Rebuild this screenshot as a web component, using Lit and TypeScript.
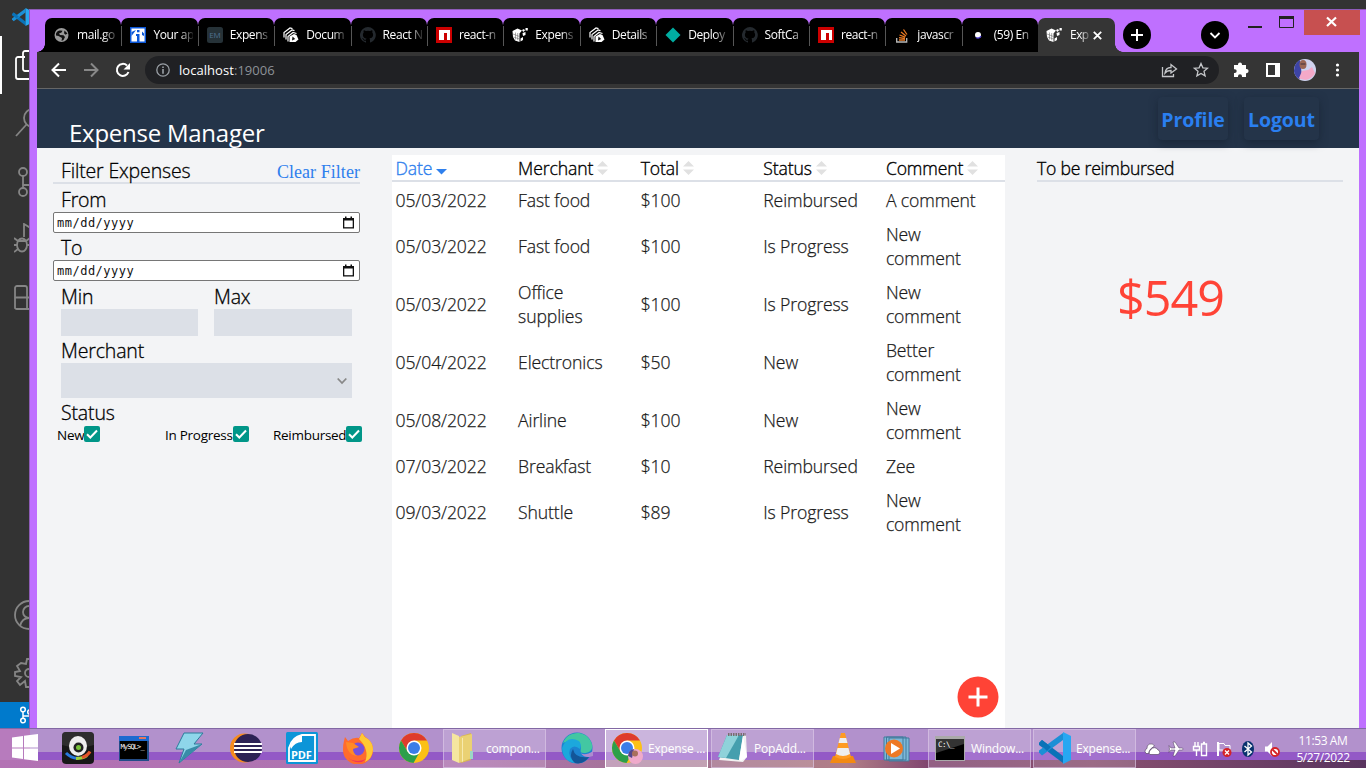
import { LitElement, html, svg, css } from "lit";
import { customElement } from "lit/decorators.js";
import { classMap } from "lit/directives/class-map.js";

const npm = svg`<path fill="#c00" d="M0 0h16v16H0z"/><path fill="#fff" d="M3 3h11v10h-3V6H8v7H3z"/>`;
const github = svg`<path fill="#24292e" d="M8 0a8 8 0 0 0-2.5 15.6c.4 0 .5-.2.5-.4v-1.500c-2.200.5-2.700-1-2.700-1-.4-.9-.9-1.100-.9-1.100-.7-.5.1-.5.1-.5.8 0 1.200.8 1.200.8.7 1.300 1.900.9 2.300.7.1-.5.3-.9.500-1.100-1.800-.2-3.600-.9-3.600-4 0-.9.3-1.600.8-2.100-.1-.2-.4-1 .1-2.100 0 0 .7-.2 2.200.8a7.500 7.500 0 0 1 4 0c1.500-1 2.200-.8 2.200-.8.4 1.100.2 1.900.1 2.100.5.6.8 1.300.8 2.100 0 3.100-1.900 3.700-3.700 3.900.3.3.6.8.6 1.500v2.200c0 .2.1.5.6.4A8 8 0 0 0 8 0z"/>`;
const cube = svg`<path fill="#fff" d="M.5 4L5.500 1.500l4.500 2L7.500 6.500V15L3 13.500 1 10z"/><path fill="#fff" d="M10 3l2-1 1 1.500-1.800 1.500zM13.500 1h2.300v2.500h-2.300zM10.500 6l3-1v3l-2.500 1zM8.500 11.500L11 10v3l-2.500 1.500z"/><path d="M1 7l6.500 2.500M1.500 10l6 2M3.500 5.500v7M5.700 6v7.200" stroke="#555" stroke-width=".5" fill="none"/>`;
const stack = svg`<g fill="none" stroke="#fff" stroke-width="1.200"><path d="M1 10.500V5.500L7 1l2.500.7M3 12.500v-5L9 3l2.500.7M5 14.500V9.500l5-4 3.500 1"/></g><path fill="#fff" d="M6.500 9.500l4.500-2.500 2.500 1 2 4.500-3 2.500H6.500z"/><path fill="#111" d="M9.500 9.500l2.700 2.500-3.200 1.500z"/>`;

const favicons: Record<string, unknown> = {
  globe: svg`<circle cx="7.500" cy="8" r="7" fill="#9a9a9a"/><path fill="#111" d="M2 6.500C3 4 5 3 6.500 3.500l2 .2L7.500 5.500 5 6.500l1 1.500 3.500.3 1.500 1.700-1.500 3-2 1 .5-3L4.500 9 2 8.500zM10.500 3.500l3 3-2 1.300-1.500-1.500z"/>`,
  info: svg`<path fill="#fff" d="M0 0h16v16H0z"/><path fill="none" stroke="#0b57d8" stroke-width="1.500" d="M.7.700h14.600v14.600H.7z"/><path fill="#0b57d8" d="M7 3h2.500v2.300H7zM6 7h3.500v8H7V9H6zM3 7l-1.500 2V5L6 3zM12 8V4.500l2 2V9z"/>`,
  em: svg`<rect width="16" height="16" rx="2.500" fill="#263238"/><text x="8" y="11" text-anchor="middle" font-family="Open Sans" font-size="8" fill="#4f7091">EM</text>`,
  stack, github, npm, cube,
  diamond: svg`<path fill="#00ada1" d="M8 .5L15.500 8 8 15.500.5 8z"/>`,
  so: svg`<path fill="none" stroke="#b9b9b9" stroke-width="1.300" d="M2.700 11v4h10v-4"/><path stroke="#e87922" stroke-width="1.300" d="M5 13h6M5 10.700l6 .8M5.500 8l5.700 2.200M7 5l5 4M9.500 2.500l3.500 5"/>`,
  dot: svg`<circle cx="7" cy="8" r="3" fill="#fff"/><path d="M5 10.500a3.400 3.400 0 0 0 5-1.500" stroke="#4b3bd0" stroke-width="1.300" fill="none"/>`,
};

const tabs: [string, string][] = [
  ["globe", "mail.go"], ["info", "Your ap"], ["em", "Expens"], ["stack", "Docum"],
  ["github", "React N"], ["npm", "react-n"], ["cube", "Expens"], ["stack", "Details"],
  ["diamond", "Deploy"], ["github", "SoftCa"], ["npm", "react-n"], ["so", "javascr"], ["dot", "(59) En"],
];

@customElement("browser-tabs")
class BrowserTabs extends LitElement {
  static styles = css`
    :host { display: flex; height: 43px; padding-left: 8px; box-sizing: border-box; align-items: stretch; }
    .tabs { display: flex; width: 1070px; flex: none; margin-top: 9px; background: linear-gradient(transparent 8px, #000 8px); }
    .foot { width: 8px; height: 8px; flex: none; align-self: end; margin-left: -8px; background: radial-gradient(circle at 0 0, transparent 7.500px, #000 8px); }
    .foot.right { margin-left: 0; background: radial-gradient(circle at 100% 0, transparent 7.500px, #353535 8px); }
    .tab { flex: 1 1 0; min-width: 0; height: 34px; border-radius: 7px 7px 0 0; background: #000; display: flex; align-items: center; position: relative; box-sizing: border-box; padding-left: 9px; gap: 7px; }
    .tab + .tab::before { content: ""; position: absolute; left: 0; top: 8px; width: 1px; height: 20px; background: #565656; }
    .tab.tab.active::before { display: none; }
    .tab.active { background: #353535; flex: 0 0 77px; padding-left: 8px; gap: 8px; }
    .icon { width: 16px; height: 16px; flex: none; }
    .name { font: 12px/16px "Open Sans", sans-serif; letter-spacing: -.4px; color: #fff; width: 40px; overflow: hidden; white-space: nowrap; -webkit-mask-image: linear-gradient(90deg, #000 26px, transparent 42px); }
    .active .name { width: 20px; margin-right: -5px; letter-spacing: -.6px; -webkit-mask-image: linear-gradient(90deg, #000 10px, transparent 22px); }
    .close { width: 9px; height: 9px; flex: none; }
    .round { width: 28px; height: 28px; flex: none; margin-top: 12px; }
    .list { margin-left: 50px; }
    .controls { margin-left: auto; display: flex; align-items: flex-start; flex: none; }
    .mm { width: 75px; height: 26px; }
    .x { width: 56px; height: 25px; margin: 1px 6px 0 0; }
  `;
  render() {
    return html`
      <span class="foot"></span>
      <div class="tabs">
        ${tabs.map(([icon, name]) => html`<div class="tab"><svg class="icon" viewBox="0 0 16 16">${favicons[icon]}</svg><span class="name">${name}</span></div>`)}
        <div class="tab active"><svg class="icon" viewBox="0 0 16 16">${cube}</svg><span class="name">Exp</span>
          <svg class="close" viewBox="0 0 9 9"><path d="M.8.800l7.400 7.400M8.200.8L.8 8.200" stroke="#fff" stroke-width="1.800"/></svg></div>
      </div>
      <span class="foot right"></span>
      <svg class="round" viewBox="0 0 28 28"><circle cx="14" cy="14" r="14"/><path d="M14 8v12M8 14h12" stroke="#fff" stroke-width="2"/></svg>
      <svg class="round list" viewBox="0 0 28 28"><circle cx="14" cy="14" r="14"/><path d="M9.500 12l4.500 4.500 4.500-4.500" stroke="#fff" stroke-width="1.800" fill="none"/></svg>
      <div class="controls">
        <svg class="mm" viewBox="5 0 75 26"><path fill="#222" d="M24 17h14v2H24z"/><path fill="none" stroke="#222" d="M55.500 7.500h14v11h-14z"/><path fill="#222" d="M55 7h15v3H55z"/></svg>
        <svg class="x" viewBox="0 0 56 25"><path fill="#c75050" d="M0 0h56v25H0z"/><path d="M23 7.500l9 8.500M32 7.500l-9 8.500" stroke="#fff" stroke-width="2.200"/></svg>
      </div>`;
  }
}

@customElement("browser-toolbar")
class BrowserToolbar extends LitElement {
  static styles = css`
    :host { display: flex; align-items: center; height: 37px; box-sizing: border-box; background: #353535; border-bottom: 1px solid #666; }
    svg { display: block; flex: none; }
    .nav { width: 108px; height: 36px; }
    .omni { width: 1074px; height: 28px; border-radius: 14px; background: #202124; display: flex; align-items: center; box-sizing: border-box; padding: 0 10px 0 11px; }
    .url { margin-left: 9px; flex: 1; font: 13px/20px "Open Sans", sans-serif; color: #8d9197; letter-spacing: .05px; }
    .url b { font-weight: 400; color: #fff; }
    .right { width: 140px; height: 36px; }
  `;
  render() {
    return html`
      <svg class="nav" viewBox="0 0 108 36" fill="none" stroke-width="2">
        <path stroke="#fff" d="M29 18H16M22 11.500L15.500 18l6.500 6.500"/>
        <path stroke="#888" d="M47 18h13M54 11.500l6.500 6.500-6.500 6.500"/>
        <path stroke="#fff" d="M91.500 20a6 6 0 1 1-1.500-6.500"/><path fill="#fff" d="M93 11v6.500h-6.500z"/>
      </svg>
      <div class="omni">
        <svg width="14" height="14" viewBox="0 0 14 14"><circle cx="7" cy="7" r="6.200" fill="none" stroke="#9aa0a6" stroke-width="1.300"/><path fill="#9aa0a6" d="M6.200 3.500h1.600V5H6.200zM6.200 6h1.600v4.700H6.200z"/></svg>
        <span class="url"><b>localhost</b>:19006</span>
        <svg width="48" height="16" viewBox="0 0 48 16" fill="none" stroke="#c5c7ca" stroke-width="1.300">
          <path d="M1.500 5v9.500h11V12M4 11c.5-4 3-5.500 6-5.500V2.500L15.500 7 10 11V8.500C7 8.500 5.500 9 4 11z"/>
          <path d="M40 1.500l1.900 4.300 4.700.4-3.600 3.100 1.100 4.600L40 11.500l-4.100 2.400L37 9.300l-3.600-3.100 4.700-.4z"/>
        </svg>
      </div>
      <svg class="right" viewBox="0 0 140 36">
        <path fill="#fff" d="M15 13h4v-.5a2 2 0 0 1 4 0v.5h4v4h.5a2 2 0 0 1 0 4.200H27V25h-4v-.8a1.900 1.900 0 0 0-4 0v.8h-4v-4h.8a1.900 1.900 0 0 0 0-3.800H15z"/>
        <path fill="#fff" d="M47 11h14v14H47z"/><path fill="#353535" d="M49 13h7v10h-7z"/>
        <circle cx="86" cy="18" r="11" fill="#cfd2ee"/><path fill="#3d44a5" d="M75.500 15a11 11 0 0 1 5.500-7l1 8 1 9-3 2a11 11 0 0 1-4.500-12z"/>
        <path fill="#f4a9c8" d="M80 26l3-7 6-1 4-3 3 6a11 11 0 0 1-16 5z"/><ellipse cx="84" cy="12.500" rx="3.500" ry="4.500" fill="#9b6655"/><path d="M81.500 12h5" stroke="#40333c"/>
        <g fill="#fff"><circle cx="118.500" cy="13" r="1.600"/><circle cx="118.500" cy="18" r="1.600"/><circle cx="118.500" cy="23" r="1.600"/></g>
      </svg>`;
  }
}

const calendar = svg`<path fill="#111" d="M1 2h2V.5h1.500V2h4V.500H10V2h2v10.500H1z"/><path fill="#fff" d="M2.300 4.500h8.400v6.700H2.300z"/>`;
const check = svg`<rect width="16" height="16" rx="2" fill="#009688"/><path d="M3 8.200l3.300 3.300L13 4.500" fill="none" stroke="#fff" stroke-width="2"/>`;

@customElement("expense-filter")
class ExpenseFilter extends LitElement {
  static styles = css`
    :host { display: block; width: 307px; font: 300 19.500px/26px "Open Sans", sans-serif; -webkit-text-stroke: .3px; color: #000; letter-spacing: -.15px; }
    .head { display: flex; justify-content: space-between; height: 36px; box-sizing: border-box; border-bottom: 2px solid #dce0e7; padding: 8px 0 0 8px; line-height: 30px; margin-bottom: 1px; }
    .clear { font: 18px/32px "Liberation Serif", serif; color: #2f80ed; letter-spacing: .05px; -webkit-text-stroke: 0; }
    .label { padding-left: 8px; height: 27px; line-height: 30px; }
    .date { height: 21px; box-sizing: border-box; border: 1px solid #767676; border-radius: 2px; background: #fff; display: flex; justify-content: space-between; align-items: center; padding: 0 4px 0 3px; font: 12px/18px "DejaVu Sans Mono", monospace; letter-spacing: .5px; color: #111; -webkit-text-stroke: 0; }
    .date svg { width: 13px; height: 13px; }
    .pair { display: grid; grid-template-columns: 137px 138px; column-gap: 16px; padding-left: 8px; }
    .pair .label { padding-left: 0; height: 28px; line-height: 32px; }
    .box { height: 27px; background: #dce0e7; }
    .merchant { line-height: 30px; }
    .select { height: 35px; width: 291px; margin-left: 8px; box-sizing: border-box; padding-right: 5px; background: #dce0e7; display: flex; align-items: center; justify-content: flex-end; }
    .status { height: 28px; line-height: 30px; }
    .checks { display: grid; grid-template-columns: 108px 108px 100px; padding-left: 4px; font-size: 13.500px; font-weight: 400; line-height: 18px; letter-spacing: -.28px; white-space: nowrap; -webkit-text-stroke: 0; }
    .checks span { display: flex; }
    .checks svg { width: 16px; height: 16px; flex: none; }
  `;
  render() {
    const date = html`<div class="date"><span>mm/dd/yyyy</span><svg viewBox="0 0 13 13">${calendar}</svg></div>`;
    return html`
      <div class="head"><span>Filter Expenses</span><span class="clear">Clear Filter</span></div>
      <div class="label">From</div>${date}
      <div class="label">To</div>${date}
      <div class="pair"><div class="label">Min</div><div class="label">Max</div><div class="box"></div><div class="box"></div></div>
      <div class="label merchant">Merchant</div>
      <div class="select"><svg width="10" height="8" viewBox="0 0 10 8"><path d="M.7 1.500L5 6l4.300-4.500" fill="none" stroke="#888" stroke-width="1.800"/></svg></div>
      <div class="label status">Status</div>
      <div class="checks">${["New", "In Progress", "Reimbursed"].map((s) => html`<span>${s}<svg viewBox="0 0 16 16">${check}</svg></span>`)}</div>`;
  }
}

const columns = ["Date", "Merchant", "Total", "Status", "Comment"];
const rows = [
  ["05/03/2022", "Fast food", "$100", "Reimbursed", "A comment"],
  ["05/03/2022", "Fast food", "$100", "Is Progress", "New comment"],
  ["05/03/2022", "Office supplies", "$100", "Is Progress", "New comment"],
  ["05/04/2022", "Electronics", "$50", "New", "Better comment"],
  ["05/08/2022", "Airline", "$100", "New", "New comment"],
  ["07/03/2022", "Breakfast", "$10", "Reimbursed", "Zee"],
  ["09/03/2022", "Shuttle", "$89", "Is Progress", "New comment"],
];

@customElement("expense-table")
class ExpenseTable extends LitElement {
  static styles = css`
    :host { display: block; width: 613px; background: #fff; position: relative; font: 300 17.600px/24px "Open Sans", sans-serif; -webkit-text-stroke: .25px; letter-spacing: -.12px; color: #1a1a1a; }
    .row { display: grid; grid-template-columns: repeat(5, 122.600px); padding: 5px 0; align-items: center; }
    .row > span { padding: 0 24px 0 3.500px; }
    .row > span:last-child { padding-right: 18px; }
    .head { height: 27px; padding: 0; box-sizing: border-box; border-bottom: 2px solid #dce0e7; color: #000; margin-bottom: 1px; -webkit-text-stroke: .35px; }
    .head > span, .head > span:last-child { display: flex; align-items: center; gap: 4px; padding-right: 0; }
    .head svg { width: 11px; height: 14px; }
    .sorted { color: #2f80ed; }
    .add { position: absolute; right: 6px; top: 521px; width: 42px; height: 42px; }
  `;
  render() {
    return html`
      <div class="row head">${columns.map((c, i) => html`<span class=${classMap({ sorted: i === 0 })}>${c}<svg viewBox="0 0 11 14">
        ${i === 0 ? svg`<path fill="#2f80ed" d="M0 8h11L5.500 13.500z"/>` : svg`<path fill="#e1e1e1" d="M0 5.500h11L5.500 0zM0 8.500h11L5.500 14z"/>`}</svg></span>`)}</div>
      ${rows.map((r) => html`<div class="row">${r.map((c) => html`<span>${c}</span>`)}</div>`)}
      <svg class="add" viewBox="0 0 42 42"><circle cx="21" cy="21" r="20.500" fill="#ff4336"/><path d="M21 11.500v19M11.500 21h19" stroke="#fff" stroke-width="3"/></svg>`;
  }
}

@customElement("expense-page")
class ExpensePage extends LitElement {
  static styles = css`
    :host { display: block; background: #f3f4f6; font-family: "Open Sans", sans-serif; }
    header { height: 59px; background: #243449; display: flex; padding: 0 40px 0 32px; justify-content: space-between; box-sizing: border-box; }
    h1 { margin: 26px 0 0; font: 400 24px/36px "Open Sans", sans-serif; letter-spacing: -.25px; color: #fff; }
    nav { display: flex; gap: 16px; padding-top: 8px; }
    button { height: 43px; border: 0; padding: 2px 0 0; border-radius: 4px; background: #243449; box-shadow: 0 3px 8px #14202e99; font: 700 19.500px/24px "Open Sans", sans-serif; letter-spacing: -.1px; color: #2a7ff0; }
    .profile { width: 70px; }
    .logout { width: 75px; }
    main { display: flex; height: 620px; align-items: stretch; padding-left: 16px; gap: 32px; }
    expense-table { margin-top: 7px; }
    .sum { width: 306px; padding-top: 7px; font-size: 17.600px; font-weight: 300; line-height: 27px; letter-spacing: -.22px; color: #000; }
    .sumhead { border-bottom: 2px solid #dce0e7; height: 25px; -webkit-text-stroke: .35px; }
    .amount { color: #ff4336; font-size: 48.500px; font-weight: 400; line-height: 64px; letter-spacing: -1px; padding: 83px 0 0 80px; }
  `;
  render() {
    return html`
      <header><h1>Expense Manager</h1><nav><button class="profile">Profile</button><button class="logout">Logout</button></nav></header>
      <main><expense-filter></expense-filter><expense-table></expense-table>
        <section class="sum"><div class="sumhead">To be reimbursed</div><div class="amount">$549</div></section></main>`;
  }
}

const chrome = svg`<circle cx="16" cy="16" r="15" fill="#fbc116"/><path fill="#de3b2d" d="M3 8.500a15 15 0 0 1 26 0H16l-6.500 11z"/><path fill="#2c9f4b" d="M3 8.500A15 15 0 0 0 15.500 31l6.500-11.500-12.500 0z"/><circle cx="16" cy="16" r="7.500" fill="#fff"/><circle cx="16" cy="16" r="6" fill="#3b7de8"/>`;
const vscode = svg`<path fill="#0a72b8" d="M0 11l3-3 21 16v7L0 13z"/><path fill="#1b8fd6" d="M0 20.500l3 3L24 8V1L0 18.500z"/><path fill="#0a72b8" d="M0 11l3-3 9 7-4 4z"/><path fill="#27a7f2" d="M24 0l8 4v24l-8 4z"/>`;

const art: Record<string, unknown> = {
  webcam: svg`<rect width="32" height="32" rx="4" fill="#171717"/><path fill="#444" d="M0 4a4 4 0 0 1 4-4h24a4 4 0 0 1 4 4v9Q16 18 0 13z" opacity=".5"/><path d="M4 21q6 6 13 5" fill="none" stroke="#2979dc" stroke-width="3"/><path d="M14 26.500q7 0 11-3" fill="none" stroke="#9ed13c" stroke-width="3"/><path d="M20 25.500q6-2 8-6" fill="none" stroke="#e2532a" stroke-width="3"/><ellipse cx="16" cy="14" rx="9" ry="10" fill="#eee"/><circle cx="16.500" cy="15.500" r="5" fill="#222"/><circle cx="16.500" cy="15.500" r="2.500" fill="#78c33a"/>`,
  mysql: svg`<path fill="#244d88" d="M1 4h30v25H1z"/><path fill="#1d6ad0" d="M1 4h30v5H1z"/><path fill="#e5755d" d="M21 5h7v2h-7z"/><path d="M2 9h27v18H2z"/><text x="2.500" y="17" font-family="DejaVu Sans Mono" font-size="7" letter-spacing="-.9" fill="#fff">MySQL&gt;_</text>`,
  bolt: svg`<path fill="#8ed6ea" stroke="#2b7d9b" d="M10 1h19l-9 11h8L5 31l5-14H2z"/><path fill="#388ca8" d="M12 18l16-6L5 31z"/>`,
  eclipse: svg`<circle cx="14.500" cy="16" r="14.500" fill="#f58c20"/><circle cx="18" cy="16" r="14" fill="#2c2255"/><path d="M4 12h28M4 16h28M4 20h28" stroke="#fff" stroke-width="1.800"/>`,
  pdf: svg`<rect width="32" height="32" rx="1.500" fill="#0c95d8"/><path d="M3 17v12h26V3H16Q6 5 3 16z" fill="none" stroke="#fff" stroke-width="1.800"/><path d="M4 14Q8 5 16 3v7q-7 0-11 7z" fill="#fff"/><text x="5" y="26.500" font-family="Open Sans" font-weight="700" font-size="11" fill="#fff">PDF</text>`,
  firefox: svg`<path fill="#ff6b2d" d="M2 9l1-4 3 4Q12 5 17 6l3-5q3 4 6 6 5 4 5 11a15 14.500 0 0 1-30 0Q1 12 2 9z"/><path fill="#ffc934" d="M17 7l3-6q2 4 6 6 5 4 5 11-1 9-8 12 5-12-6-23z"/><circle cx="16" cy="17" r="6.500" fill="#7650db"/><path fill="#ff8a25" d="M4 10l7 1 6 4-6 2q0 4 4 7-10-1-11-14z"/><path fill="#f0345a" d="M4 24q8 8 20 3-8 8-20-3z"/>`,
  chrome,
  folder: svg`<path fill="#d8b653" d="M12 4l10-3v27l-10 3z"/><path fill="#f5e6a0" d="M3 1l7 3v27l-7-3z"/><path fill="#ead173" d="M10 5l13-3v24l-13 5z"/><path fill="#f7eaae" d="M13 6l1-.3v23.800l-1 .3z"/><path fill="#9bd8c6" d="M21 19h3v8h-3z"/>`,
  edge: svg`<circle cx="16" cy="16" r="15.500" fill="#1c83d0"/><path fill="#43c7a2" d="M2 11C6 0 22-3 29 8c5 8 1 13-6 13-5 0-3-3-3-6 0-5-10-7-18-4z"/><path fill="#1ca8dc" d="M1 16Q6 3 18 9q3 3 1 8-6-5-10 0-3 8 6 14Q2 30 1 16z"/><path fill="#135598" d="M12 17q2 10 16 8-6 8-14 6-7-6-2-14z"/><path fill="#ae8bcf" d="M20 21.500q5 2.500 12-2.500v5l-2 .500q-6 2-10-3z"/>`,
  chromeUser: svg`${chrome}<circle cx="24.500" cy="24.500" r="7.500" fill="#efaacb"/><path fill="#53478f" d="M17 24a7.500 7.500 0 0 1 6-7l-2 9z"/><circle cx="24" cy="21.500" r="3" fill="#a8705c"/>`,
  notepad: svg`<path fill="#f1f1f1" d="M12 3h17l1 22-4 5L2 28z"/><path fill="#459fae" d="M10 3h16l-4 25L1 25z"/><path fill="#8fd2da" d="M10 3h12L9 26l-8-1z"/><path fill="#fff" d="M26 4l4 21-6 4-2-1z"/><path d="M11 2.500h18" stroke="#776e6e" stroke-width="3" stroke-dasharray="1.500 1"/>`,
  vlc: svg`<path fill="#f38a12" d="M6 24h20l3 7H3z"/><path fill="#ff9b22" d="M14 1h4l6 24q-8 4-16 0z"/><path fill="#eee" d="M12.800 6h6.400l1.300 5h-9zM10.500 16h11l1.500 6q-7 4-14 0z"/>`,
  wmp: svg`<path fill="#7db8d8" stroke="#437a9c" d="M8 6h20v23H8zM5.500 5h19.500v23H5.500zM3 5h19v23H3z"/><circle cx="13" cy="16.500" r="9" fill="#ee7924"/><path fill="#fff" d="M10 11l9 5.500-9 5.500z"/>`,
  cmd: svg`<path fill="#aaa" d="M1 4h30v25H1z"/><path d="M2 7h28v21H2z"/><path fill="#333" d="M2 7h28v5L2 21z"/><text x="4" y="15" font-family="DejaVu Sans Mono" font-size="7.500" letter-spacing="-.5" fill="#fff">C:\\_</text>`,
  vscode,
};

@customElement("task-bar")
class TaskBar extends LitElement {
  static styles = css`
    :host { display: flex; align-items: center; height: 40px; box-sizing: border-box; border-top: 1px solid #8268a4;
      font: 12px/16px "Open Sans", sans-serif; letter-spacing: -.2px; color: #fff;
      background: linear-gradient(90deg, #b77bbd 30px, transparent 30px) 0 0 / 100% 31px no-repeat,
        linear-gradient(#b291cc 0 23px, #9359c6 23px 31px, transparent 31px),
        linear-gradient(90deg, #b372b4, #ad75af 35%, #a2728f 50%, #b17f88 62%, #80456f 68%, #8a5271 80%, #59345f); }
    svg { display: block; flex: none; }
    .start { width: 50px; height: 39px; }
    .pin { width: 32px; height: 32px; margin: 0 12px; position: relative; top: -1px; }
    .vlc { margin: 0 11px 0 10px; }
    .wmp { margin: 0 15px 0 11px; }
    .button { display: flex; align-items: center; box-sizing: border-box; width: 103px; height: 39px; border: 1px solid #ddccea99; padding-left: 5px; background: #ffffff26; gap: 5px; white-space: nowrap; margin-right: 3px; flex: none; }
    .button .pin { margin: 0; }
    .button.active { background: #ffffff55; border-color: #fff; }
    .cmd { margin-right: 2px; }
    .button .cmd { margin-right: 0; }
    .first { margin-left: 1px; }
    .tray { display: flex; margin-left: 5px; gap: 8px; }
    .clock { width: 72px; margin-left: 7px; flex: none; text-align: center; line-height: 17px; letter-spacing: -.4px; }
  `;
  private pin(name: string) { return html`<svg class="pin ${name}" viewBox="0 0 32 32">${art[name]}</svg>`; }
  private button(name: string, label: string, active = false) {
    return html`<div class=${classMap({ button: true, active, cmd: name === "cmd" })}>${this.pin(name)}<span>${label}</span></div>`;
  }
  render() {
    const tray = [
      svg`<path fill="#fff" stroke="#4a3a58" stroke-width=".6" d="M1 10.500a3 3 0 0 1 2-3 4 4 0 0 1 7.500-2.500l-4 3-2 4.500H2zM6 13.500a3 3 0 0 1 1-5 4 4 0 0 1 7 .5 2.300 2.300 0 0 1 0 4.500z"/>`,
      svg`<path fill="#fff" stroke="#4a3a58" stroke-width=".5" d="M1 4.500L3 7h4L5 1h2l4 6h3a1 1 0 0 1 0 2h-3l-4 6H5l2-6H3l-2 2.500L1.500 8z"/>`,
      svg`<path fill="none" stroke="#fff" stroke-width="1.400" d="M9.500 3h5v11.500h-5zM11 1.500h2M3 1v4M6 1v4M1.500 5.500h6v3.500h-6zM4.500 9v6"/>`,
      svg`<path d="M2 1v14" stroke="#fff" stroke-width="2"/><path d="M3 2.500h5l1 2h5v6H9L8 9H3z" fill="none" stroke="#fff"/><circle cx="11" cy="11.500" r="4.500" fill="#d42328"/><path d="M9 9.500l4 4M13 9.500l-4 4" stroke="#fff" stroke-width="1.300"/>`,
      svg`<ellipse cx="8" cy="8" rx="6" ry="8" fill="#08316d"/><path d="M4.500 5l7 6L8 14V2l3.500 3-7 6" fill="none" stroke="#fff" stroke-width="1.300"/>`,
      svg`<path d="M1 5.500h2.500L8 1v14l-4.500-4.500H1z" fill="#fff"/><circle cx="11" cy="11" r="4" fill="#fff" stroke="#d42328" stroke-width="1.800"/><path d="M8.500 8.500l5 5" stroke="#d42328" stroke-width="1.800"/>`,
    ];
    return html`
      <svg class="start" viewBox="0 0 50 39"><path fill="#fff" d="M12 8.500l11-1.500v11.500H12zM24 6.800L38 5v13.500H24zM12 19.500h11V30l-11-1.500zM24 19.500h14V32l-14-1.800z"/></svg>
      ${["webcam", "mysql", "bolt", "eclipse", "pdf", "firefox", "chrome"].map((n) => this.pin(n))}
      <span class="first"></span>
      ${this.button("folder", "compon...")}${this.pin("edge")}${this.button("chromeUser", "Expense ...", true)}${this.button("notepad", "PopAdd...")}
      ${this.pin("vlc")}${this.pin("wmp")}
      ${this.button("cmd", "Window...")}${this.button("vscode", "Expense...")}
      <div class="tray">${tray.map((t) => html`<svg width="16" height="16" viewBox="0 0 16 16">${t}</svg>`)}</div>
      <div class="clock">11:53 AM<br />5/27/2022</div>`;
  }
}

const side: [string, unknown][] = [
  ["files", svg`<path d="M10 7H3a2 2 0 0 0-2 2v18a2 2 0 0 0 2 2h14v-7M10 1h15v20H10a2 2 0 0 1-2-2V3a2 2 0 0 1 2-2z"/>`],
  ["search", svg`<circle cx="19" cy="10" r="9"/><path d="M12.500 16.500L2 28"/>`],
  ["git", svg`<circle cx="9" cy="5" r="4"/><circle cx="9" cy="25" r="4"/><path d="M9 9v12M9 18h10"/>`],
  ["debug", svg`<ellipse cx="8" cy="22" rx="5" ry="6.500"/><path d="M10 14V1l20 12M0 15l4 3M0 22h3M0 29l4-3M16 15l-4 3M13 22h4M4 18h8"/>`],
  ["ext", svg`<path d="M1 25V5a2 2 0 0 1 2-2h8a2 2 0 0 1 2 2v21H3a2 2 0 0 1-2-1zM1 14.500h23V26H13"/>`],
  ["user", svg`<circle cx="15" cy="15" r="14"/><circle cx="15" cy="12" r="6"/><path d="M6 26q2-8 9-8"/>`],
  ["gear", svg`<circle cx="15" cy="15" r="4"/><path d="M12 6l1-5h4l1 5 5-3 3 4-4 4 6 2v5l-6 1 3 5-4 3-4-3-1 5h-4l-1-6-5 4-3-4 4-4-6-1v-4l5-1-3-5 4-3z"/>`],
];

@customElement("editor-edge")
class EditorEdge extends LitElement {
  static styles = css`
    :host { display: flex; flex-direction: column; width: 30px; height: 728px; overflow: hidden; background: #333; }
    svg { display: block; flex: none; }
    .logo { width: 20px; height: 18px; margin: 8px 0 10px 11px; }
    .slot { height: 58.300px; display: flex; align-items: center; padding-left: 14px; flex: none; box-sizing: border-box; }
    .slot svg { width: 30px; height: 30px; fill: none; stroke: #858585; stroke-width: 1.800; }
    .files { border-left: 2px solid #fff; padding-left: 13px; }
    .files svg { stroke: #fff; }
    .debug { padding-bottom: 4px; }
    .user { margin-top: auto; }
    .status { height: 26px; background: #007acc; padding-left: 19px; flex: none; display: flex; align-items: center; }
  `;
  render() {
    return html`
      <svg class="logo" viewBox="0 0 32 32">${vscode}</svg>
      ${side.map(([name, icon]) => html`<div class="slot ${name}"><svg viewBox="0 0 30 30">${icon}</svg></div>`)}
      <div class="status"><svg width="14" height="18" viewBox="0 0 14 18" fill="none" stroke="#fff" stroke-width="1.500"><circle cx="4" cy="3.500" r="2.300"/><circle cx="4" cy="14.500" r="2.300"/><circle cx="11" cy="6" r="2.300"/><path d="M4 6v6M4 10h6"/></svg></div>`;
  }
}

@customElement("app-root")
class AppRoot extends LitElement {
  static styles = css`
    :host { display: block; position: relative; width: 1366px; height: 768px; overflow: hidden; background: #333; }
    .window { position: absolute; left: 29px; top: 9px; width: 1337px; height: 719px; box-sizing: border-box; background: #bf70ff; border: 1px solid #8e5bb8; border-right: 0; border-bottom: 0; overflow: hidden; display: flex; flex-direction: column; padding: 0 7px; }
    browser-tabs { margin-right: -7px; flex: none; margin-top: -1px; }
    browser-toolbar, expense-page { flex: none; }
    task-bar { position: absolute; left: 0; bottom: 0; width: 1366px; }
  `;
  render() {
    return html`<editor-edge></editor-edge>
      <div class="window"><browser-tabs></browser-tabs><browser-toolbar></browser-toolbar><expense-page></expense-page></div>
      <task-bar></task-bar>`;
  }
}
